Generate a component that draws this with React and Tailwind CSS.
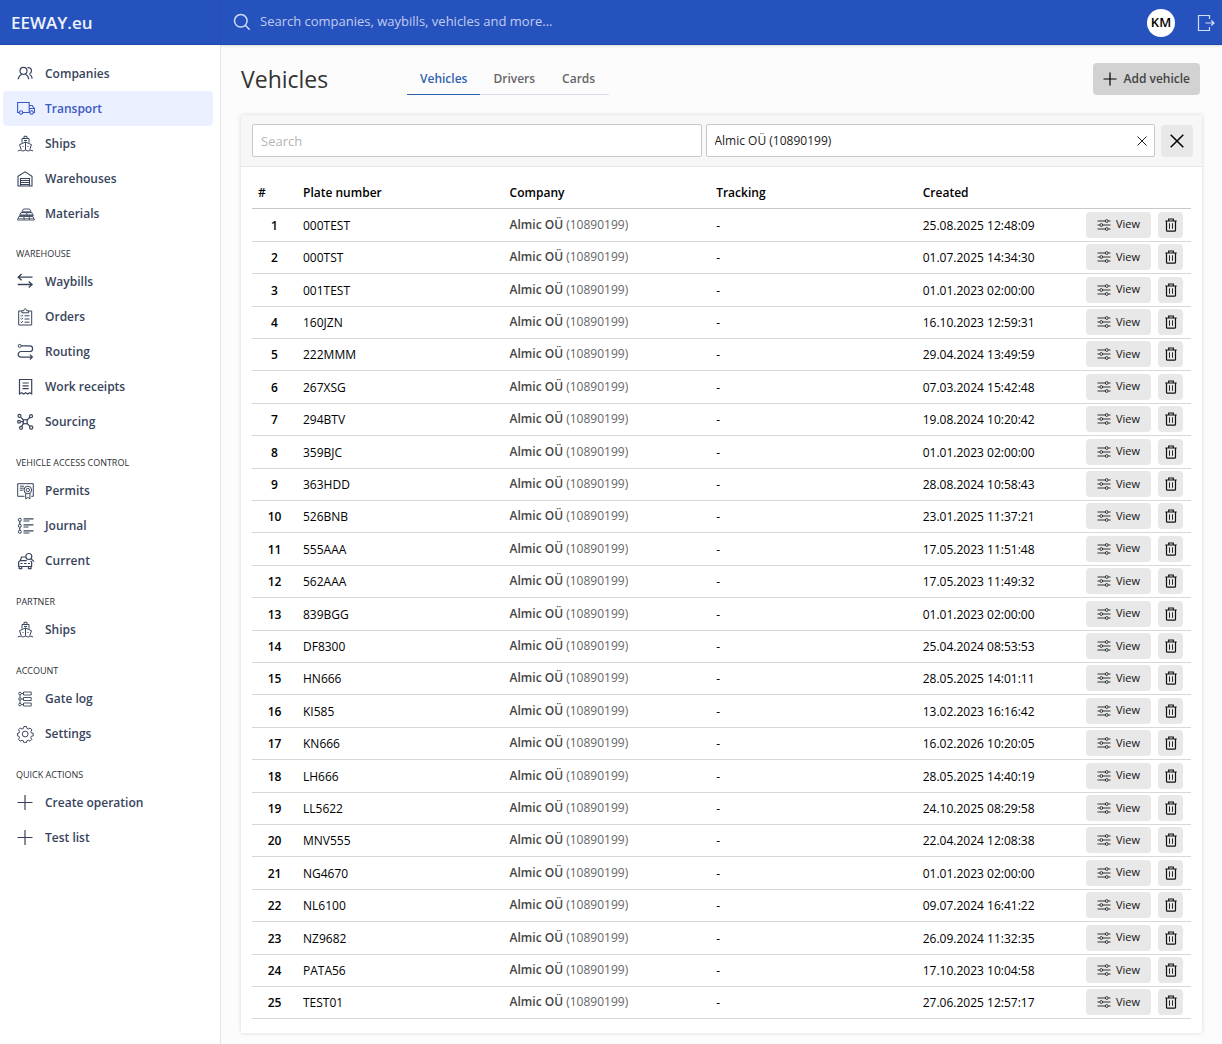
import React from 'react';

const mainMenu = [
    { name: 'Companies', icon: 'companies' },
    { name: 'Transport', icon: 'transport' },
    { name: 'Ships', icon: 'ships' },
    { name: 'Warehouses', icon: 'warehouses' },
    { name: 'Materials', icon: 'materials' },
];

const menuSections = [
    {
        title: 'WAREHOUSE',
        items: [
            { name: 'Waybills', icon: 'waybills' },
            { name: 'Orders', icon: 'orders' },
            { name: 'Routing', icon: 'routing' },
            { name: 'Work receipts', icon: 'receipts' },
            { name: 'Sourcing', icon: 'sourcing' },
        ],
    },
    {
        title: 'VEHICLE ACCESS CONTROL',
        items: [
            { name: 'Permits', icon: 'permits' },
            { name: 'Journal', icon: 'journal' },
            { name: 'Current', icon: 'current' },
        ],
    },
    { title: 'PARTNER', items: [{ name: 'Ships', icon: 'ships' }] },
    {
        title: 'ACCOUNT',
        items: [
            { name: 'Gate log', icon: 'gatelog' },
            { name: 'Settings', icon: 'settings' },
        ],
    },
    {
        title: 'QUICK ACTIONS',
        items: [
            { name: 'Create operation', icon: 'plus' },
            { name: 'Test list', icon: 'plus' },
        ],
    },
];

const vehicles = [
    ['000TEST', '25.08.2025 12:48:09'],
    ['000TST', '01.07.2025 14:34:30'],
    ['001TEST', '01.01.2023 02:00:00'],
    ['160JZN', '16.10.2023 12:59:31'],
    ['222MMM', '29.04.2024 13:49:59'],
    ['267XSG', '07.03.2024 15:42:48'],
    ['294BTV', '19.08.2024 10:20:42'],
    ['359BJC', '01.01.2023 02:00:00'],
    ['363HDD', '28.08.2024 10:58:43'],
    ['526BNB', '23.01.2025 11:37:21'],
    ['555AAA', '17.05.2023 11:51:48'],
    ['562AAA', '17.05.2023 11:49:32'],
    ['839BGG', '01.01.2023 02:00:00'],
    ['DF8300', '25.04.2024 08:53:53'],
    ['HN666', '28.05.2025 14:01:11'],
    ['KI585', '13.02.2023 16:16:42'],
    ['KN666', '16.02.2026 10:20:05'],
    ['LH666', '28.05.2025 14:40:19'],
    ['LL5622', '24.10.2025 08:29:58'],
    ['MNV555', '22.04.2024 12:08:38'],
    ['NG4670', '01.01.2023 02:00:00'],
    ['NL6100', '09.07.2024 16:41:22'],
    ['NZ9682', '26.09.2024 11:32:35'],
    ['PATA56', '17.10.2023 10:04:58'],
    ['TEST01', '27.06.2025 12:57:17'],
];

// All menu icons share an 18x18 grid
const icons = {
    companies: (
        <g strokeWidth="1.2">
            <circle cx="6.5" cy="5.800" r="3.500" />
            <path d="M1.200 14.300c.3-2.700 1.500-4 3.600-5M8.300 9.300c2 .9 3.200 2.400 3.500 5M10.500 2.700c2.200-.6 4 .9 4 3 0 1.500-.8 2.600-2 3.100M12.500 9.300c1.700.9 2.500 2.200 2.700 4.300" />
        </g>
    ),
    transport: (
        <g strokeWidth="1.1">
            <path d="M2.200 12.500H.6V2.500h11.600v10H5.800M12.200 5.500h3l2.300 3.200v3.800h-1.200M12.200 12.500h.6M12.500 8.500h4.900" />
            <circle cx="4" cy="12.500" r="1.700" />
            <circle cx="14.600" cy="12.500" r="1.700" />
        </g>
    ),
    ships: (
        <>
            <path d="M7 3.500V1.300h3v2.200M5 7.700V3.500h7v4.200M2.500 9.700 8.500 7l6 2.700-1.800 5M2.500 9.700l1.800 5M8.500 7v8M7 5.500h3" />
            <path d="M.8 16c1 0 1.300-.8 2.400-.8s1.300.8 2.600.8 1.500-.8 2.700-.8 1.500.8 2.700.8 1.500-.8 2.600-.8 1.400.8 2.300.8" />
            <path d="M5.500 11.500h1M10.500 11.500h1" />
        </>
    ),
    warehouses: (
        <>
            <path d="M1 16V6.200L8 1.800l7 4.400V16M3.500 16V8.500h9V16M.5 16h15" strokeWidth="1.100" />
            <path d="M3.500 10.500h9M3.500 12.500h9M3.500 14.500h9" />
        </>
    ),
    materials: (
        <g strokeWidth=".9">
            <path d="M6.500 4h6l1.500 2.800H5zM4 7.500h5.500l.8 3H2.500zM9.500 7.500h5.300l1.500 3h-6M1.800 11.500h5l.5 3.500H.6zM6.800 11.500H12l.6 3.500H7.300M12 11.500h4l1.400 3.500h-4.800" />
            <path d="M3.300 9.300h12M1.300 13.500h15.500" strokeWidth=".6" />
        </g>
    ),
    waybills: <path d="M15.500 4.200H1.200M4.600 1.100 1.200 4.200l3.400 3.100M.7 11.500h14.400M11.700 8.400l3.400 3.100-3.400 3.100" strokeWidth="1.300" />,
    orders: (
        <>
            <path d="M4.500 3H1.700v14h13V3h-2.800M4.800 4.800V2.700h2C6.900 1.500 7.300.9 8.200.9s1.300.6 1.400 1.800h2v2.100z" />
            <path d="M3.800 7.500l.8.800 1.300-1.500M3.800 10.500l.8.800L5.900 9.800M3.800 13.800l.8.800 1.300-1.500M7.500 7.800h5M7.500 11h5M7.500 14.200h5" />
        </>
    ),
    routing: (
        <>
            <circle cx="2.700" cy="2.900" r="1.500" />
            <path d="M4.200 2.900h8.600a2.800 2.800 0 0 1 0 5.600H4a2.800 2.800 0 0 0 0 5.600h11.200M12.900 11.600l2.500 2.500-2.500 2.400" strokeWidth="1.200" />
        </>
    ),
    receipts: (
        <>
            <path d="M2.500 16V1.500h12.200V16l-2-1.200-2 1.200-2-1.200-2 1.200-2-1.200z" strokeWidth="1.200" />
            <path d="M5.500 5h6.200M5.500 7.800h6.200M5.500 10.600h6.200" strokeWidth="1.200" />
        </>
    ),
    sourcing: (
        <>
            <path d="M6.500 7 3.800 4.300M10 7l3-2.800M6.500 10.400l-1.800 3M10 10.400l3 3M6.300 8.700H3.500" strokeWidth="1.200" />
            <rect x="6.300" y="6.800" width="3.900" height="3.900" strokeWidth="1.200" />
            <circle cx="2.500" cy="2.900" r="1.500" strokeWidth="1.200" />
            <circle cx="14" cy="3.200" r="1.500" strokeWidth="1.200" />
            <circle cx="2" cy="8.700" r="1.400" strokeWidth="1.200" />
            <circle cx="4" cy="14.800" r="1.500" strokeWidth="1.200" />
            <circle cx="14.200" cy="14.500" r="1.600" strokeWidth="1.200" />
        </>
    ),
    permits: (
        <>
            <path d="M7.500 14.300H.7V1.700h15.600v12.600h-2M3 4.200h4M2.800 6.200h4M2.800 8.200h3" />
            <circle cx="10.800" cy="8" r="3.800" />
            <circle cx="10.800" cy="8" r="1.700" />
            <path d="M8.700 11.300v5.500l2.100-1.400 2.100 1.400v-5.500" />
        </>
    ),
    journal: (
        <>
            <circle cx="2.800" cy="2.800" r="1.500" />
            <circle cx="2.800" cy="8.800" r="1.500" />
            <circle cx="2.800" cy="14.800" r="1.500" />
            <path d="M2.800 4.300v3M2.800 10.300v3M6.500 1.800h10M6.500 4h6M6.500 7.800h10M6.500 10h5M6.500 13.800h10M6.500 16h6" strokeWidth="1.200" />
        </>
    ),
    current: (
        <>
            <path d="M8.500 5H4.600L3.200 8.700 1.600 10v4.500h13V10l-1-1M3.200 8.700h6.500M2.200 14.500v2.200h2.500v-2.200M11.500 14.500v2.200h2.500v-2.200M3.500 11.500h2M7 11.500h2.500M11 11.500h2" strokeWidth="1.200" />
            <circle cx="11.800" cy="4.500" r="3" strokeWidth="1.200" />
            <path d="m14 6.700 3 3" strokeWidth="1.200" />
        </>
    ),
    gatelog: (
        <g strokeWidth=".9">
            <path d="M6.500 2h7.700v3H6.500zM6.500 7.500h7.700v3H6.500zM6.500 13h7.700v3H6.500zM3 4.800v2.900M3 10.300v2.900M4.300 3.500h2.200M4.300 9h2.200M4.300 14.500h2.200" />
            <circle cx="3" cy="3.500" r="1.300" />
            <circle cx="3" cy="9" r="1.300" />
            <circle cx="3" cy="14.500" r="1.300" />
        </g>
    ),
    settings: (
        <>
            <circle cx="8.200" cy="9" r="2.900" />
            <path d="M6.900 1.500h2.600l.5 2 1.300.6 1.800-1.100 1.800 1.900-1.100 1.700.6 1.400 1.800.4v2.400l-1.900.5-.5 1.400 1 1.700-1.800 1.800-1.700-1-1.400.6-.5 1.900H6.900l-.5-1.900-1.400-.6-1.700 1-1.800-1.800 1-1.700-.5-1.400-1.600-.5V8.400L2 8l.5-1.400-1-1.700L3.300 3l1.800 1.100 1.300-.6z" />
        </>
    ),
    plus: <path d="M8 1v15M.5 8.500h15" strokeWidth="1.200" />,
};

const MenuIcon = ({ name }) => (
    <svg viewBox="0 0 18 18" className="h-[18px] w-[18px] shrink-0" fill="none" stroke="currentColor" strokeWidth="1" aria-hidden="true">
        {icons[name]}
    </svg>
);

const MenuItem = ({ item, active }) => (
    <li>
        <a
            href="#"
            className={`flex h-[35px] items-center gap-[10px] rounded pl-[14px] text-xs font-semibold ${
                active ? 'bg-[#eaf0ff] text-[#3c59c6]' : 'text-[#38445b]'
            }`}
        >
            <MenuIcon name={item.icon} />
            <span>{item.name}</span>
        </a>
    </li>
);

const Sidebar = () => (
    <nav className="w-[221px] shrink-0 border-r border-[#e3e3e5] bg-white pt-[11px] pr-[7px] pl-[3px]">
        <ul>
            {mainMenu.map((item) => (
                <MenuItem key={item.name} item={item} active={item.name === 'Transport'} />
            ))}
        </ul>
        {menuSections.map((section) => (
            <div key={section.title}>
                <h2 className="pt-[14px] pb-[2px] pl-[13px] text-[9px] leading-[17px] text-[#2b2f36]">{section.title}</h2>
                <ul className="pb-px">
                    {section.items.map((item) => (
                        <MenuItem key={item.name} item={item} />
                    ))}
                </ul>
            </div>
        ))}
    </nav>
);

const TopBar = () => (
    <header className="flex h-[45px] border-b border-[#1f49ad] bg-[#2652be] text-white shadow-sm">
        <a href="#" className="flex w-[221px] shrink-0 items-center border-r border-[#244db3] pt-[2px] pl-[11px] text-[17px] font-semibold text-[#eef2fc]">
            EEWAY.eu
        </a>
        <label className="flex min-w-0 flex-1 items-center gap-[9px] pl-3">
            <svg viewBox="0 0 18 18" className="h-[18px] w-[18px] shrink-0 text-[#d0dbf5]" fill="none" stroke="currentColor" strokeWidth="1.500" aria-hidden="true">
                <circle cx="7.800" cy="7.800" r="6.300" />
                <path d="m12.300 12.300 4.400 4.400" />
            </svg>
            <input
                type="text"
                aria-label="Search everything"
                placeholder="Search companies, waybills, vehicles and more..."
                className="w-full bg-transparent text-[13px] outline-none placeholder:text-[#c0cdf0]"
            />
        </label>
        <div className="flex items-center gap-[22px] pt-px pr-[7px]">
            <button className="h-7 w-7 rounded-full bg-white text-[13px] font-semibold text-black">KM</button>
            <button aria-label="Log out">
                <svg viewBox="0 0 18 18" className="h-[18px] w-[18px] text-[#d5def5]" fill="none" stroke="currentColor" strokeWidth="1.200" aria-hidden="true">
                    <path d="M12.500 5V1.500H1.500v15h11V13M8.500 9H17M14.300 6.500 17 9l-2.700 2.500" />
                </svg>
            </button>
        </div>
    </header>
);

const PageHeader = () => (
    <div className="flex items-center pt-[17px]">
        <h1 className="w-[166px] shrink-0 text-[23px] leading-8 text-[#333]">Vehicles</h1>
        <div className="flex h-8 text-xs font-semibold">
            <a href="#" className="border-b border-[#2a62b0] px-[13px] pt-2 text-[#2f63ae]">Vehicles</a>
            <a href="#" className="border-b border-[#d8dbeb] px-[13px] pt-2 text-[#666]">Drivers</a>
            <a href="#" className="border-b border-[#d8dbeb] px-[14px] pt-2 text-[#666]">Cards</a>
        </div>
        <button className="mr-[2px] ml-auto flex h-8 items-center gap-[6px] rounded-sm bg-[#d2d2d2] px-[10px] text-xs font-semibold text-[#444]">
            <svg viewBox="0 0 14 14" className="h-[14px] w-[14px] text-black" fill="none" stroke="currentColor" strokeWidth="1.200" aria-hidden="true">
                <path d="M7 .5v13M.5 7h13" />
            </svg>
            Add vehicle
        </button>
    </div>
);

const Filters = () => (
    <div className="flex items-center gap-[6px] border-b border-[#e5e5e5] bg-[#f7f7f7] py-[9px] pr-[9px] pl-[11px]">
        <div className="grid flex-1 grid-cols-2 gap-1">
            <input
                type="text"
                aria-label="Search"
                placeholder="Search"
                className="h-[33px] w-full rounded-xs border border-[#c8c8c8] bg-white px-2 text-[13px] outline-none placeholder:text-[#b5b5b5]"
            />
            <div className="relative">
                <input
                    type="text"
                    aria-label="Company"
                    defaultValue="Almic OÜ (10890199)"
                    className="block h-[33px] w-full rounded-xs border border-[#c8c8c8] bg-white pr-8 pl-2 text-xs text-[#222] outline-none"
                />
                <button aria-label="Clear company" className="absolute inset-y-0 right-2">
                    <svg viewBox="0 0 10 10" className="h-[10px] w-[10px] text-[#222]" fill="none" stroke="currentColor" strokeWidth="1" aria-hidden="true">
                        <path d="m.5.5 9 9M9.500.5l-9 9" />
                    </svg>
                </button>
            </div>
        </div>
        <button aria-label="Reset filters" className="flex h-8 w-8 shrink-0 items-center justify-center rounded-sm bg-[#e8e8e8]">
            <svg viewBox="0 0 14 14" className="h-[14px] w-[14px] text-black" fill="none" stroke="currentColor" strokeWidth="1.500" aria-hidden="true">
                <path d="m.7.700 12.600 12.600M13.300.7.700 13.300" />
            </svg>
        </button>
    </div>
);

const RowActions = ({ plate }) => (
    <div className="flex gap-[7px]">
        <button className="flex h-[26px] w-[65px] items-center justify-center gap-[5px] rounded-sm bg-[#e8e8e8] text-[11px] text-[#111]">
            <svg viewBox="0 0 14 12" className="h-3 w-[14px] text-[#333]" fill="none" stroke="currentColor" strokeWidth="1" aria-hidden="true">
                <path d="M.5 2h7.800M11.200 2h2.300M.5 6h2.300M5.700 6h7.800M.5 10h7.800M11.200 10h2.300" />
                <circle cx="9.700" cy="2" r="1.400" />
                <circle cx="4.300" cy="6" r="1.400" />
                <circle cx="9.700" cy="10" r="1.400" />
            </svg>
            View
        </button>
        <button aria-label={`Delete ${plate}`} className="flex h-[26px] w-[25px] items-center justify-center rounded-sm bg-[#e8e8e8]">
            <svg viewBox="0 0 12 14" className="h-[14px] w-3 text-[#111]" fill="none" stroke="currentColor" strokeWidth="1.200" aria-hidden="true">
                <path d="M.3 3h11.400M3.700 3V1h4.600v2M1.500 3v9.200q0 1 1 1h7q1 0 1-1V3" />
                <path d="M4.500 5.300v5.500M7.500 5.300v5.500" strokeWidth=".9" />
            </svg>
        </button>
    </div>
);

const VehicleTable = () => (
    <table className="w-full table-fixed text-left text-xs text-black">
        <colgroup>
            <col className="w-[45px]" />
            <col className="w-[22%]" />
            <col className="w-[22%]" />
            <col className="w-[22%]" />
            <col />
            <col className="w-[111px]" />
        </colgroup>
        <thead>
            <tr className="h-8 border-b border-[#c8c8c8] [&>th]:px-[6px] [&>th]:pt-[2px] [&>th]:font-semibold">
                <th>#</th>
                <th>Plate number</th>
                <th>Company</th>
                <th>Tracking</th>
                <th>Created</th>
                <th aria-label="Actions"></th>
            </tr>
        </thead>
        <tbody>
            {vehicles.map(([plate, created], index) => (
                <tr key={plate} className="h-8 border-b border-[#d8d8d8] nth-[5n+1]:h-[33px] nth-[5n+3]:h-[33px] [&>td]:px-[6px]">
                    <th className="pt-[2px] text-center font-semibold">{index + 1}</th>
                    <td className="pt-[2px]">{plate}</td>
                    <td>
                        <span className="font-semibold text-[#444]">Almic OÜ</span> <span className="text-[#666]">(10890199)</span>
                    </td>
                    <td className="pt-[2px]">-</td>
                    <td className="pt-[2px]">{created}</td>
                    <td>
                        <RowActions plate={plate} />
                    </td>
                </tr>
            ))}
        </tbody>
    </table>
);

const App = () => {
    return (
        <div className="flex min-h-screen flex-col bg-[#fcfcfc] font-['Open_Sans',sans-serif]">
            <TopBar />
            <div className="flex flex-1">
                <Sidebar />
                <main className="min-w-0 flex-1 px-5 pt-[1px] pb-[11px]">
                    <PageHeader />
                    <section className="mt-5 bg-white shadow-[0_0_4px_rgba(0,0,0,0.15)]">
                        <Filters />
                        <div className="px-[11px] pt-[9px] pb-[14px]">
                            <VehicleTable />
                        </div>
                    </section>
                </main>
            </div>
        </div>
    );
};

export default App;
